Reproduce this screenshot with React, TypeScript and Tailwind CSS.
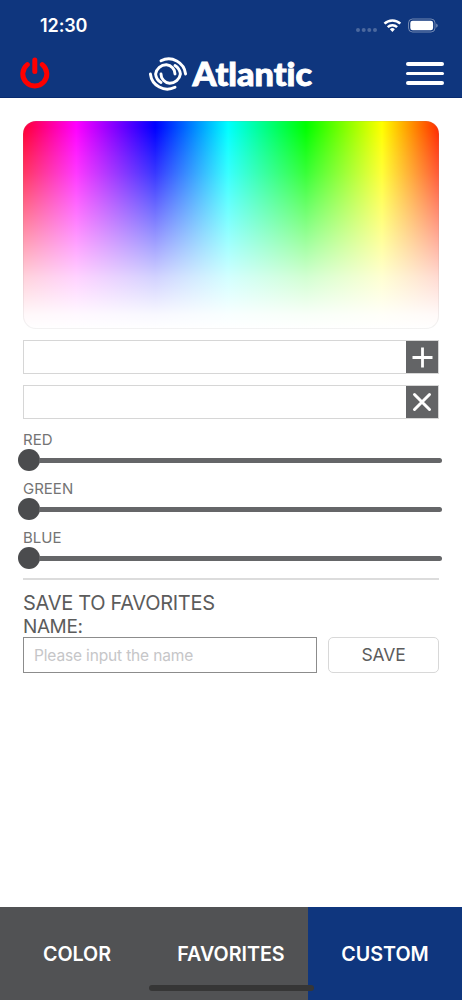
import {useState} from "react";

type SliderProps = {
  label: string;
};

const ColorSlider = ({label}: SliderProps) => {
  return (
    <div className="h-[49px]">
      <div className="h-[20px] pt-px text-[15px] leading-[20px] text-[#747474]">{label}</div>
      <div className="-ml-[5px] w-[424px] h-[22px] flex items-center">
        <div className="size-[22px] shrink-0 rounded-full bg-[#4b4c4e]"></div>
        <div className="-ml-px flex-1 h-[5px] rounded-r-full bg-[#656668]"></div>
      </div>
    </div>
  );
};

const PowerIcon = () => (
  <svg width="30" height="32" viewBox="0 0 30 32" fill="none" stroke="#ff0000" strokeWidth="5" strokeLinecap="round">
    <path d="M7.3 7.6a12 12 0 1 0 15 0" />
    <path d="M14.8 3v11.5" />
  </svg>
);

const Logo = () => (
  <svg width="166" height="46" viewBox="148 51 166 46" fill="none" stroke="#fff">
    <g strokeWidth="2.9" strokeLinecap="round">
      <path d="M161 60.800A17 17 0 0 1 185.600 74" />
      <path d="M161 82.600A11.500 11.500 0 0 1 155.600 74A10.700 10.700 0 0 1 166.500 64.800A9.200 9.200 0 0 1 175 74" />
    </g>
    <g strokeWidth="2.9" strokeLinecap="round" transform="rotate(180 168 74)">
      <path d="M161 60.800A17 17 0 0 1 185.600 74" />
      <path d="M161 82.600A11.500 11.500 0 0 1 155.600 74A10.700 10.700 0 0 1 166.500 64.800A9.200 9.200 0 0 1 175 74" />
    </g>
    <text
      x="192.500"
      y="86.300"
      fill="#fff"
      strokeWidth="0.9"
      textLength="119.500"
      lengthAdjust="spacingAndGlyphs"
      className="font-[Lato,sans-serif] font-black text-[32px] [font-variant-ligatures:none]"
    >
      Atlantic
    </text>
  </svg>
);

const StatusIcons = () => (
  <svg width="84" height="18" viewBox="355 17 84 18">
    <g fill="#fff" fillOpacity="0.25">
      <circle cx="358" cy="30" r="2" />
      <circle cx="363.700" cy="30" r="2" />
      <circle cx="369.300" cy="30" r="2" />
      <circle cx="375" cy="30" r="2" />
    </g>
    <g fill="none" stroke="#fff" strokeWidth="2.500">
      <path d="M384.500 23.700a11.200 11.200 0 0 1 15.800 0" />
      <path d="M387.700 27.100a6.800 6.800 0 0 1 9.400 0" />
    </g>
    <path d="M389.900 29.200a3.800 3.800 0 0 1 5 0L392.400 32z" fill="#fff" />
    <rect x="408.500" y="19" width="26.500" height="13" rx="4" fill="none" stroke="#fff" strokeOpacity="0.4" />
    <rect x="410.300" y="20.800" width="22.800" height="9.400" rx="2.300" fill="#fff" />
    <path d="M436.300 23.500c1.800.8 1.800 3.400 0 4.200z" fill="#fff" fillOpacity="0.5" />
  </svg>
);

const tabs = ["COLOR", "FAVORITES", "CUSTOM"];

const App = () => {
  const [tab, setTab] = useState("CUSTOM");
  const [name, setName] = useState("");

  return (
    <div className="w-[462px] h-[1000px] flex flex-col bg-white font-[Inter,sans-serif] overflow-hidden">
      <header className="h-[98px] shrink-0 bg-[#0f367e] border-b border-[#082b70]">
        <div className="h-[50px] flex justify-between pl-10 pr-[23px] pt-[17px]">
          <span className="text-[18px] leading-[18px] font-semibold tracking-[-0.1px] text-white">12:30</span>
          <StatusIcons />
        </div>
        <div className="h-[47px] flex items-start pl-5 pr-[18px]">
          <button className="mt-[7px]">
            <PowerIcon />
          </button>
          <div className="ml-[98px] mt-px">
            <Logo />
          </div>
          <button className="ml-auto mt-3 flex flex-col gap-[6px]">
            <span className="block w-[38px] h-[3.500px] rounded-full bg-white"></span>
            <span className="block w-[38px] h-[3.500px] rounded-full bg-white"></span>
            <span className="block w-[38px] h-[3.500px] rounded-full bg-white"></span>
          </button>
        </div>
      </header>
      <main className="flex-1 px-[23px] pt-[23px]">
        <div className="h-[208px] rounded-[13px] border border-[#8888881c] bg-origin-border bg-[linear-gradient(to_bottom,#ffffff00_3%,#ffffff38_25%,#ffffff85_50%,#ffffffd2_75%,#fffffff8_93%,#ffffff_100%),linear-gradient(to_right,#ff0033_0%,#ff00ff_12.8%,#0000ff_31.8%,#00ffff_49.3%,#00ff00_68%,#ffff00_86.3%,#ff2a00_100%)]"></div>
        <div className="mt-[11px] h-[34px] flex border border-[#d6d6d6]">
          <div className="flex-1"></div>
          <button className="w-8 flex items-center justify-center bg-[#636466]">
            <svg width="22" height="22" viewBox="0 0 22 22" stroke="#fff" strokeWidth="2.8">
              <path d="M11.500 1.500v20M1.500 11.500h20" />
            </svg>
          </button>
        </div>
        <div className="mt-[11px] h-[34px] flex border border-[#d6d6d6]">
          <div className="flex-1"></div>
          <button className="w-8 flex items-center justify-center bg-[#636466]">
            <svg width="20" height="20" viewBox="0 0 20 20" stroke="#fff" strokeWidth="3" strokeLinecap="round">
              <path d="M2.500 2.500l15 15M17.500 2.500l-15 15" />
            </svg>
          </button>
        </div>
        <div className="mt-[10px] h-[149px]">
          <ColorSlider label="RED" />
          <ColorSlider label="GREEN" />
          <ColorSlider label="BLUE" />
        </div>
        <div className="h-[2px] bg-[#dcdcdc]"></div>
        <div className="pt-[11px] text-[#5c5c5c]">
          <p className="text-[20px] leading-[24px] tracking-[-0.3px]">SAVE TO FAVORITES</p>
          <p className="h-[22px] text-[19px] leading-[24px] tracking-[-0.4px]">NAME:</p>
        </div>
        <div className="flex gap-[11px] h-9">
          <input
            type="text"
            placeholder="Please input the name"
            value={name}
            onChange={(e) => setName(e.target.value)}
            className="w-[294px] border border-[#8c8c8c] px-[10px] pt-[2px] text-[15.500px] tracking-[-0.15px] text-[#666] placeholder:text-[#c6c6c8] focus:outline-none"
          />
          <button className="flex-1 pt-px border border-[#d8d8d8] rounded-[5px] text-[17.500px] tracking-[-0.2px] text-[#5c5c5c]">SAVE</button>
        </div>
      </main>
      <nav className="relative h-[93px] shrink-0 flex">
        {tabs.map((t) => (
          <button
            key={t}
            onClick={() => setTab(t)}
            className={`flex-1 basis-0 pt-[2px] text-[19.700px] font-semibold text-white ${t === tab ? "bg-[#0f367e]" : "bg-[#515254]"}`}
          >
            {t}
          </button>
        ))}
        <div className="absolute left-[149px] bottom-[9px] w-[165px] h-[6px] rounded-full bg-[#363636]"></div>
      </nav>
    </div>
  );
};

export default App;
